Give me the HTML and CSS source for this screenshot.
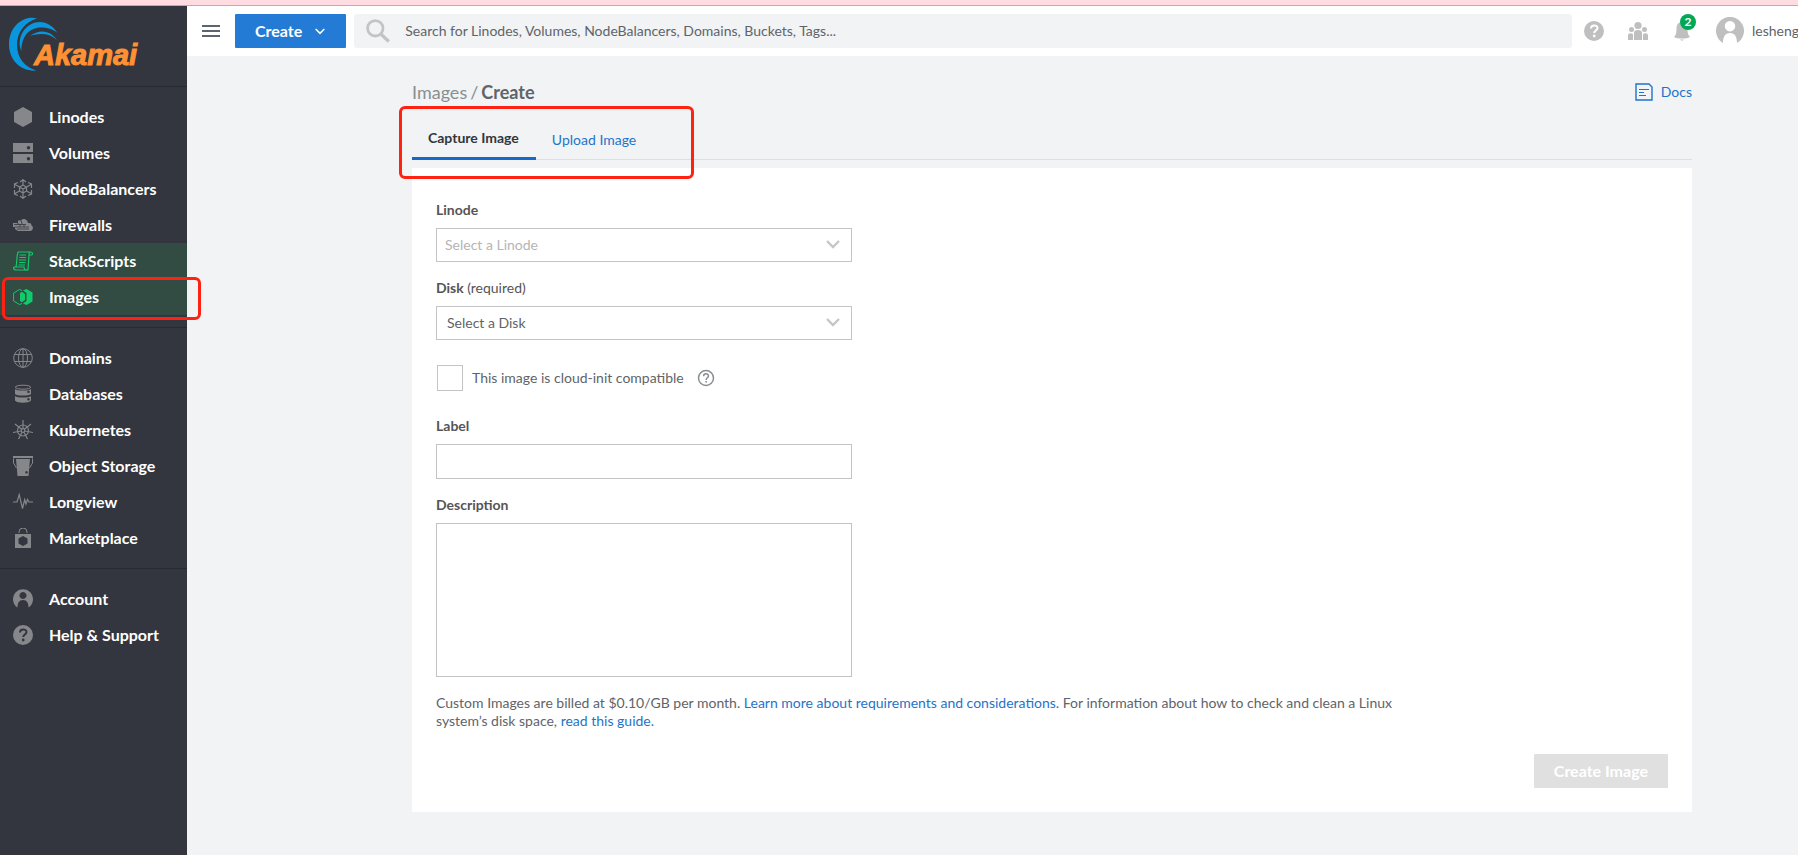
FILE: index.html
```
<!DOCTYPE html>
<html lang="en">
<head>
<meta charset="utf-8">
<meta name="viewport" content="width=device-width, initial-scale=1">
<title>Create an Image</title>
<link rel="stylesheet" href="styles.css">
</head>
<body>
<div class="notice-strip"></div>
<div class="app">
  <aside class="sidebar">
    <a class="logo" href="#" aria-label="Akamai home">
      <svg width="140" height="60" viewBox="0 0 140 60">
        <path fill="#0a96dc" d="M37 6.500C24 3 9 14 9 32.500C9 48 21 60 36.500 58.500C25 55.500 17 46 17 33C17 20 25 10 37 6.500Z"/>
        <path fill="#0a96dc" d="M57.500 21C53 14 47 10 40 10C28 10 18 21 20 35L21.500 39.500C21 25 29 15.500 41 15.500C47 15.500 53 17 57.500 21Z"/>
        <path fill="#0a96dc" d="M30 24C39 17 50 18 57 28C49 21 40 21 30 24Z"/>
        <text class="logo-word" x="34" y="53">Akamai</text>
      </svg>
    </a>
    <nav class="nav" aria-label="Main">
      <ul class="nav-group">
        <li><a class="nav-item" href="#"><svg class="nav-icon" viewBox="0 0 20 20"><path fill="currentColor" d="M10 0l9 5v10l-9 5-9-5V5z"/></svg>Linodes</a></li>
        <li><a class="nav-item" href="#"><svg class="nav-icon" viewBox="0 0 20 20"><path fill="currentColor" fill-rule="evenodd" d="M0 0h20v9H0zM15.500 3a1.700 1.700 0 1 0 .01 0zM0 11h20v9H0zM15.500 14a1.700 1.700 0 1 0 .01 0z"/></svg>Volumes</a></li>
        <li><a class="nav-item" href="#"><svg class="nav-icon" viewBox="0 0 20 20" fill="none" stroke="currentColor" stroke-width="1.200"><path d="M10 6l3.500 2v4L10 14l-3.500-2V8zM10 1v5M10 14v5M2 5.500L6.500 8M13.500 12l4.500 2.500M2 14.500L6.500 12M13.500 8L18 5.500M7 3l3-2.300L13 3M7 17l3 2.300L13 17M1.500 9V5l3.500-1.500M18.500 9V5L15 3.500M1.500 11v4L5 16.500M18.500 11v4L15 16.500M6.500 8l3.500 2 3.500-2M10 10v4"/></svg>NodeBalancers</a></li>
        <li><a class="nav-item" href="#"><svg class="nav-icon" viewBox="0 0 20 20"><path fill="currentColor" d="M0 8h5V5.500h3.500C9 3 14.500 3.500 15 8c3-.5 3.500 1 3.500 2.500 2.500 1 1.500 5.500-1.500 5.500H5l-3-2v-2H0z"/><path stroke="#33363e" fill="none" stroke-width=".8" d="M1 9.500h12M2 12h14M4 14h12M5 8v1.500M9 8v1.500M7 9.500V12M11 9.500V12M8.500 6v2"/></svg>Firewalls</a></li>
        <li><a class="nav-item is-active" href="#"><svg class="nav-icon" viewBox="0 0 20 20" fill="none" stroke="currentColor" stroke-width="1.200"><path d="M5 1h12.500c2.500 0 2.500 3 1 3H16l-1 15H3c-3 0-2.500-3-2-3h10c0 3 3 4 4 2M5 1c-1 2-1 9-2 15M16 4c0-2 .5-3 1.500-3M6.500 4H13M6.500 6.500H13M6 9h7M6 11.500h6.500M5.500 14H12"/></svg>StackScripts</a></li>
        <li><a class="nav-item is-active" href="#" aria-current="page"><svg class="nav-icon" viewBox="0 0 20 20"><path fill="none" stroke="currentColor" d="M9 3.500L6.500 2.500.6 6v8l5.900 3.500L9 16.500"/><path fill="currentColor" d="M10 3.500L13.500 2 19.500 5.500v9l-6 3.500L10 16.500l3.500-2.500V6zM7 6l2-1.200L12 7v6l-3 2.200L7 14z"/></svg>Images</a></li>
      </ul>
      <ul class="nav-group">
        <li><a class="nav-item" href="#"><svg class="nav-icon" viewBox="0 0 20 20" fill="none" stroke="currentColor"><circle cx="10" cy="10" r="9.300"/><ellipse cx="10" cy="10" rx="4.500" ry="9.300"/><path d="M10 .7v18.600M1.500 6.500h17M1.500 13.500h17"/></svg>Domains</a></li>
        <li><a class="nav-item" href="#"><svg class="nav-icon" viewBox="0 0 20 20"><ellipse cx="10" cy="3.200" rx="7.700" ry="2" fill="none" stroke="currentColor"/><path fill="currentColor" fill-rule="evenodd" d="M2 5c2 2 14 2 16 0v5c-2 2-14 2-16 0zM15.500 6.500a1.300 1.300 0 1 0 .01 0zM2 12c2 2 14 2 16 0v4.500c-2 3-14 3-16 0zM15.500 14a1.300 1.300 0 1 0 .01 0z"/></svg>Databases</a></li>
        <li><a class="nav-item" href="#"><svg class="nav-icon" viewBox="0 0 20 20" fill="none" stroke="currentColor" stroke-width="1.200"><circle cx="10" cy="10.500" r="5.500"/><circle cx="10" cy="10.500" r="1.800"/><path d="M10 0v8.700M2 4l6.600 5.300M18 4l-6.600 5.300M0 12.500l8.200-1.500M20 12.500L11.800 11M5.500 19l3.700-7M14.500 19l-3.700-7"/></svg>Kubernetes</a></li>
        <li><a class="nav-item" href="#"><svg class="nav-icon" viewBox="0 0 20 20"><path fill="currentColor" fill-rule="evenodd" d="M0 0h20v2H0zM3 3h14l-1.500 17h-11zM13.500 15a1.300 1.300 0 1 0 .01 0z"/><path fill="none" stroke="currentColor" d="M.5 2.500v4.500l3 5M19.500 2.500v4.500l-3 5"/></svg>Object Storage</a></li>
        <li><a class="nav-item" href="#"><svg class="nav-icon" viewBox="0 0 20 20" fill="none" stroke="currentColor" stroke-width="1.200"><path d="M0 10h4l2.200-7.500 3.300 14 2.200-9 1.300 4.500 1.500-4.500L16 10h4"/></svg>Longview</a></li>
        <li><a class="nav-item" href="#"><svg class="nav-icon" viewBox="0 0 20 20"><path fill="none" stroke="currentColor" d="M6 5V4a4 4 0 0 1 8 0v1"/><path fill="currentColor" fill-rule="evenodd" d="M2 6h16v14H2zM10 8l-4.500 2.500v5L10 18l4.500-2.500v-5z"/></svg>Marketplace</a></li>
      </ul>
      <ul class="nav-group">
        <li><a class="nav-item" href="#"><svg class="nav-icon" viewBox="0 0 20 20"><path fill="currentColor" fill-rule="evenodd" d="M4.500 18.500A10 10 0 1 1 15.500 18.500C15.500 14 14 11 10 11S4.500 14 4.500 18.500zM10 3a3.500 3.500 0 1 0 .01 0z"/></svg>Account</a></li>
        <li><a class="nav-item" href="#"><svg class="nav-icon" viewBox="0 0 20 20"><circle cx="10" cy="10" r="10" fill="currentColor"/><path d="M7 7.500c0-4 6.500-4 6.500-.5 0 2.500-3.300 2.500-3.300 5" fill="none" stroke="#33363e" stroke-width="2"/><circle cx="10.200" cy="15" r="1.400" fill="#33363e"/></svg>Help &amp; Support</a></li>
      </ul>
    </nav>
    <div class="mark mark-nav"></div>
  </aside>

  <div class="page">
    <header class="topbar">
      <button class="icon-button menu-button" type="button" aria-label="Toggle menu"><svg width="18" height="12" viewBox="0 0 18 12"><path fill="#5d646f" d="M0 0h18v2H0zM0 5h18v2H0zM0 10h18v2H0z"/></svg></button>
      <button class="button-primary" type="button">Create <svg width="10" height="7" viewBox="0 0 10 7"><path d="M.7 1L5 5.300 9.300 1" fill="none" stroke="#fff" stroke-width="1.600"/></svg></button>
      <label class="search">
        <svg width="24" height="24" viewBox="0 0 24 24" fill="none" stroke="#c4c4c4"><circle cx="9.300" cy="9.300" r="7.700" stroke-width="2.800"/><path d="M14.800 15l8 7.500" stroke-width="3.200"/></svg>
        <input class="search-input" type="text" aria-label="Search" placeholder="Search for Linodes, Volumes, NodeBalancers, Domains, Buckets, Tags...">
      </label>
      <div class="top-actions">
        <button class="icon-button" type="button" aria-label="Help"><svg width="20" height="20" viewBox="0 0 20 20"><circle cx="10" cy="10" r="10" fill="#bfbfbf"/><path d="M7 7.500c0-4 6.500-4 6.500-.5 0 2.500-3.300 2.500-3.300 5" fill="none" stroke="#fff" stroke-width="2"/><circle cx="10.200" cy="15" r="1.400" fill="#fff"/></svg></button>
        <button class="icon-button" type="button" aria-label="Community"><svg width="20" height="20" viewBox="0 0 20 20" fill="#bfbfbf"><circle cx="10" cy="4.500" r="3.600"/><circle cx="3.500" cy="8.500" r="2.500"/><circle cx="16.500" cy="8.500" r="2.500"/><path d="M6 19v-7a4 3 0 0 1 8 0v7zM0 19v-4.500c0-2.500 3-3 5-1.500v6zM20 19v-4.500c0-2.500-3-3-5-1.500v6z"/></svg></button>
        <button class="icon-button bell-button" type="button" aria-label="Notifications"><svg width="16" height="20" viewBox="0 0 16 20" fill="#bfbfbf"><path d="M8 1c4 0 5.500 3 5.500 7S14 14 16 16c-4 2-12 2-16 0 2-2 2.500-4 2.500-8S4 1 8 1zM6 18.500h4c-1 1.500-3 1.500-4 0z"/></svg><span class="badge">2</span></button>
        <button class="icon-button user-button" type="button"><svg width="28" height="28" viewBox="0 0 28 28"><path fill="#bfbfbf" fill-rule="evenodd" d="M7 26A14 14 0 1 1 21 26C21 20 19 16 14 16S7 20 7 26zM14 4a5.200 5.200 0 1 0 .01 0z"/></svg>lesheng</button>
      </div>
    </header>

    <main class="main">
      <div class="heading">
        <h1 class="breadcrumb"><a class="crumb" href="#">Images</a><span class="slash">/</span>Create</h1>
        <a class="docs" href="#"><svg width="18" height="18" viewBox="0 0 18 18" fill="none" stroke="#1f73c9"><path stroke-width="1.400" d="M1 1h13l3 3v13H1z"/><path d="M4 6.500h10M4 9.500h5M4 12.500h7"/></svg>Docs</a>
      </div>
      <div class="tabs" role="tablist">
        <button class="tab is-selected" type="button" role="tab" aria-selected="true">Capture Image</button>
        <button class="tab" type="button" role="tab" aria-selected="false">Upload Image</button>
        <div class="mark mark-tabs"></div>
      </div>
      <form class="panel">
        <div class="field">
          <label class="field-label" for="linode">Linode</label>
          <div class="select-box">
            <select class="control is-placeholder" id="linode"><option>Select a Linode</option></select>
            <svg class="chevron" viewBox="0 0 14 9"><path d="M1 1l6 6 6-6" fill="none" stroke="#c6c6c6" stroke-width="2.400"/></svg>
          </div>
        </div>
        <div class="field">
          <label class="field-label" for="disk">Disk <span class="required">(required)</span></label>
          <div class="select-box">
            <select class="control" id="disk"><option>Select a Disk</option></select>
            <svg class="chevron" viewBox="0 0 14 9"><path d="M1 1l6 6 6-6" fill="none" stroke="#c6c6c6" stroke-width="2.400"/></svg>
          </div>
        </div>
        <div class="check-row">
          <input class="check" type="checkbox" id="cloud-init">
          <label for="cloud-init">This image is cloud-init compatible</label>
          <button class="icon-button" type="button" aria-label="About cloud-init"><svg width="18" height="18" viewBox="0 0 18 18"><circle cx="9" cy="9" r="7.500" fill="none" stroke="#888f91" stroke-width="1.500"/><path d="M6.600 7.300c0-3.200 4.900-3.200 4.900-.3 0 1.800-2.400 1.800-2.400 3.900" fill="none" stroke="#888f91" stroke-width="1.500"/><path fill="#888f91" d="M8.300 12h1.600v1.600H8.300z"/></svg></button>
        </div>
        <div class="field">
          <label class="field-label" for="label">Label</label>
          <input class="control text-control" type="text" id="label">
        </div>
        <div class="field">
          <label class="field-label" for="description">Description</label>
          <textarea class="control description" id="description"></textarea>
        </div>
        <p class="billing">Custom Images are billed at $0.10/GB per month. <a href="#">Learn more about requirements and considerations.</a> For information about how to check and clean a Linux system’s disk space, <a href="#">read this guide.</a></p>
        <div class="actions"><button class="submit" type="submit" disabled>Create Image</button></div>
      </form>
    </main>
  </div>
</div>
</body>
</html>
```

FILE: styles.css
```
* { box-sizing: border-box; }

body {
  margin: 0;
  min-height: 100vh;
  display: flex;
  flex-direction: column;
  overflow-x: hidden;
  background: #f1f3f5;
  color: #606469;
  font: 14px/18px Lato, sans-serif;
}

a { color: #1f73c9; text-decoration: none; }
button, input, select, textarea { font: inherit; color: inherit; }

.notice-strip { height: 6px; background: #ffdce2; border-bottom: 1px solid #c8a6b0; }
.app { flex: 1; display: flex; }

.sidebar { position: relative; flex: none; width: 187px; background: #33363e; }
.logo { display: block; height: 81px; padding-top: 6px; border-bottom: 1px solid #272a2e; }
.logo svg { display: block; }
.logo-word {
  font: italic bold 29px "Liberation Sans", sans-serif;
  fill: #ff9133;
  stroke: #ff9133;
  stroke-width: 1px;
}
.nav-group { list-style: none; margin: 0; padding: 12px 0; }
.nav-group + .nav-group { border-top: 1px solid #272a2e; }
.nav-item {
  display: flex;
  align-items: center;
  gap: 16px;
  height: 36px;
  padding-left: 13px;
  color: #fff;
  font-size: 16px;
  font-weight: 700;
}
.nav-icon { flex: none; width: 20px; height: 20px; color: #85878b; }
.nav-item.is-active { background: #324b43; }
.is-active .nav-icon { color: #0fcb6c; }

.mark { position: absolute; z-index: 1; border: 3px solid #ff2213; border-radius: 6px; pointer-events: none; }
.mark-nav { top: 271px; left: 2px; right: -14px; height: 43px; }
.mark-tabs { top: -13px; left: -13px; width: 295px; height: 73px; }

.page { flex: 1; min-width: 0; }
.topbar {
  display: flex;
  align-items: center;
  height: 50px;
  padding-left: 15px;
  background: #fff;
}
.icon-button { display: flex; align-items: center; padding: 0; border: 0; background: none; }
.menu-button { margin-right: 15px; }
.button-primary {
  display: flex;
  align-items: center;
  gap: 13px;
  height: 34px;
  padding: 0 21px 0 20px;
  border: 0;
  border-radius: 1px;
  background: #247bd5;
  color: #fff;
  font-size: 16px;
  font-weight: 700;
}
.search {
  flex: 1;
  display: flex;
  align-items: center;
  gap: 15px;
  height: 34px;
  margin-left: 8px;
  padding-left: 12px;
  border-radius: 3px;
  background: #f1f3f5;
}
.search-input { flex: 1; min-width: 0; padding: 0; border: 0; background: none; }
.search-input::placeholder { color: #606469; opacity: 1; }
.top-actions { flex: none; display: flex; align-items: center; gap: 24px; width: 226px; padding-left: 12px; }
.bell-button { position: relative; margin-left: 2px; }
.badge {
  position: absolute;
  top: -7px;
  left: 6px;
  width: 16px;
  height: 16px;
  border-radius: 50%;
  background: #00a857;
  color: #fff;
  font-size: 12px;
  line-height: 16px;
  font-weight: 700;
}
.user-button { gap: 8px; margin-left: 2px; }

.main { max-width: 1611px; padding: 24px 106px 43px 225px; }
.heading { display: flex; align-items: center; justify-content: space-between; height: 24px; }
.breadcrumb { margin: 0; font-size: 18px; line-height: 24px; font-weight: 700; }
.crumb { color: #888f91; font-weight: 400; }
.slash { margin: 0 3px; color: #888f91; font-weight: 400; }
.docs { display: flex; align-items: center; gap: 8px; }

.tabs { position: relative; display: flex; height: 41px; margin-top: 15px; box-shadow: inset 0 -1px #dcdee1; }
.tab { padding: 0 17px 0 16px; border: 0; background: none; color: #1f73c9; }
.tab.is-selected { border-bottom: 3px solid #1669c9; color: #32363c; font-weight: 700; }

.panel { margin-top: 8px; padding: 33px 24px 24px; background: #fff; }
.field { width: 416px; max-width: 100%; margin-bottom: 17px; }
.field-label { display: block; margin-bottom: 9px; color: #555; font-weight: 700; }
.required { font-weight: 400; }
.select-box { position: relative; }
.control {
  display: block;
  width: 100%;
  height: 34px;
  padding: 0 10px;
  border: 1px solid #c4c4c4;
  border-radius: 0;
  background: #fff;
  appearance: none;
}
.text-control { height: 35px; }
.is-placeholder { padding: 0 8px; color: #b5b5b5; }
.chevron { position: absolute; top: 12px; right: 12px; width: 14px; height: 9px; pointer-events: none; }
.check-row { display: flex; align-items: center; margin: 25px 0 26px 1px; }
.check { width: 26px; height: 26px; margin: 0 9px 0 0; border: 1px solid #c4c4c4; appearance: none; }
.check-row .icon-button { margin-left: 13px; }
.description { height: 154px; resize: none; }
.billing { max-width: 960px; margin: 0; }
.actions { display: flex; justify-content: flex-end; margin-top: 24px; }
.submit {
  height: 34px;
  padding: 0 20px;
  border: 0;
  border-radius: 1px;
  background: #e0e0e0;
  color: #fff;
  font-size: 16px;
  font-weight: 700;
}
```
